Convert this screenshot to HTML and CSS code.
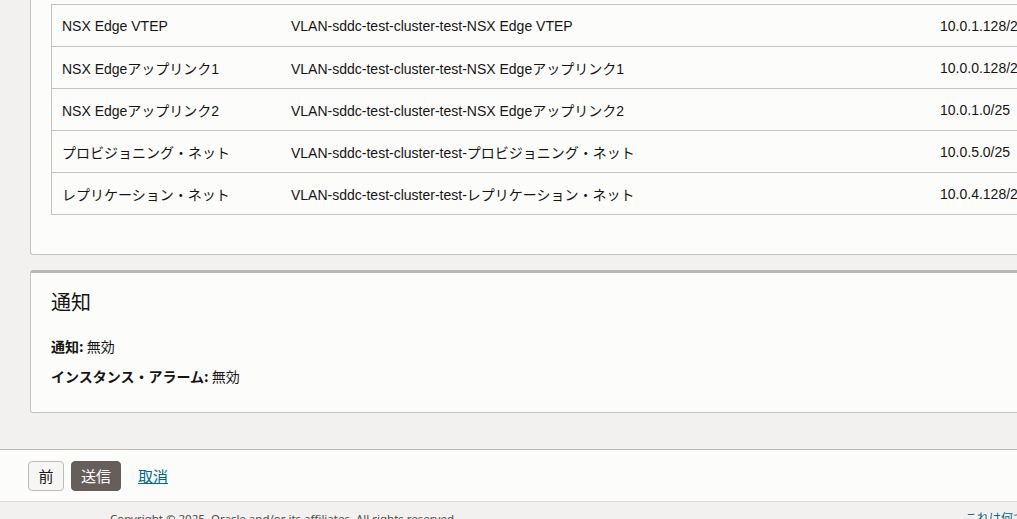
FILE: index.html
```html
<!DOCTYPE html>
<html>
	<head>
		<meta charset="utf-8" />
		<title>SDDCの作成 - 確認</title>
		<meta name="viewport" content="width=device-width, initial-scale=1.0" />
		<link rel="stylesheet" href="styles.css">
	</head>
	<body>
		<div class="page">
			<div class="panel networks">
				<table class="grid">
					<tr>
						<td class="c1">NSX Edge VTEP</td>
						<td class="c2">VLAN-sddc-test-cluster-test-NSX Edge VTEP</td>
						<td class="c3">10.0.1.128/25</td>
					</tr>
					<tr>
						<td class="c1">NSX Edgeアップリンク1</td>
						<td class="c2">VLAN-sddc-test-cluster-test-NSX Edgeアップリンク1</td>
						<td class="c3">10.0.0.128/25</td>
					</tr>
					<tr>
						<td class="c1">NSX Edgeアップリンク2</td>
						<td class="c2">VLAN-sddc-test-cluster-test-NSX Edgeアップリンク2</td>
						<td class="c3">10.0.1.0/25</td>
					</tr>
					<tr>
						<td class="c1">プロビジョニング・ネット</td>
						<td class="c2">VLAN-sddc-test-cluster-test-プロビジョニング・ネット</td>
						<td class="c3">10.0.5.0/25</td>
					</tr>
					<tr>
						<td class="c1">レプリケーション・ネット</td>
						<td class="c2">VLAN-sddc-test-cluster-test-レプリケーション・ネット</td>
						<td class="c3">10.0.4.128/25</td>
					</tr>
				</table>
			</div>

			<div class="panel notify">
				<h2>通知</h2>
				<div class="field"><strong>通知:</strong> 無効</div>
				<div class="field"><strong>インスタンス・アラーム:</strong> 無効</div>
			</div>
		</div>

		<div class="actions">
			<button class="btn">前</button>
			<button class="btn primary">送信</button>
			<a href="#" class="cancel">取消</a>
		</div>

		<div class="foot">
			<span class="copy">Copyright © 2025, Oracle and/or its affiliates. All rights reserved.</span>
			<a href="#" class="help">これは何ですか</a>
		</div>
	</body>
</html>
```

FILE: styles.css
```css
html,body
{
	margin: 0;
	padding: 0;
}

body
{
	background-color: #F2F1F0;
	color: #161513;
	font-family: "Liberation Sans", "Noto Sans CJK JP", sans-serif;
	font-size: 14px;
	overflow: hidden;
	width: 1017px;
	height: 519px;
}

.page
{
	padding-left: 30px;
	width: 1200px;
}

.panel
{
	background-color: #FCFCFB;
	border: 1px solid #C6C2BE;
	border-radius: 3px;
}

.networks
{
	border-top: 0;
	border-radius: 0 0 3px 3px;
	padding: 4px 20px 39px 20px;
}

.grid
{
	border-collapse: collapse;
	border: 1px solid #C6C2BE;
	width: 1160px;
}

.grid td
{
	border-bottom: 1px solid #C6C2BE;
	height: 41px;
	padding: 0 10px;
	white-space: nowrap;
}

.grid .c1
{
	width: 209px;
}

.grid .c2
{
	width: 629px;
}

.notify
{
	border-top: 3px solid #BDB7B1;
	margin-top: 15px;
	padding: 17px 20px 26px 20px;
}

.notify h2
{
	font-family: "Noto Sans CJK JP", sans-serif;
	font-size: 20px;
	font-weight: 400;
	line-height: 24px;
	margin: 0 0 22px 0;
}

.field
{
	font-family: "Noto Sans CJK JP", sans-serif;
	font-size: 14px;
	line-height: 20px;
	margin-bottom: 10px;
}

.field:last-child
{
	margin-bottom: 0;
}

.actions
{
	background-color: #FCFCFB;
	border-top: 1px solid #BDB8B4;
	border-bottom: 1px solid #DCDAD8;
	box-sizing: border-box;
	display: flex;
	align-items: center;
	height: 53px;
	margin-top: 36px;
	padding: 0 28px;
}

.btn
{
	background-color: #F7F6F5;
	border: 1px solid #BEBAB6;
	border-radius: 4px;
	box-sizing: border-box;
	color: #161513;
	font-family: "Noto Sans CJK JP", sans-serif;
	font-size: 15px;
	height: 30px;
	margin-right: 7px;
	padding: 0;
	width: 36px;
}

.btn.primary
{
	background-color: #665E59;
	border-color: #665E59;
	color: #FFFFFF;
	width: 50px;
}

.cancel
{
	color: #00688C;
	font-family: "Noto Sans CJK JP", sans-serif;
	font-size: 15px;
	margin-left: 10px;
}

.foot
{
	display: flex;
	font-family: "Noto Sans", "Noto Sans CJK JP", sans-serif;
	font-size: 11.5px;
	line-height: 20px;
	padding: 7px 0 0 110px;
}

.copy
{
	color: #4F4B48;
}

.help
{
	color: #00688C;
	font-size: 12px;
	margin-left: auto;
	margin-right: -32px;
	text-decoration: none;
}
```
